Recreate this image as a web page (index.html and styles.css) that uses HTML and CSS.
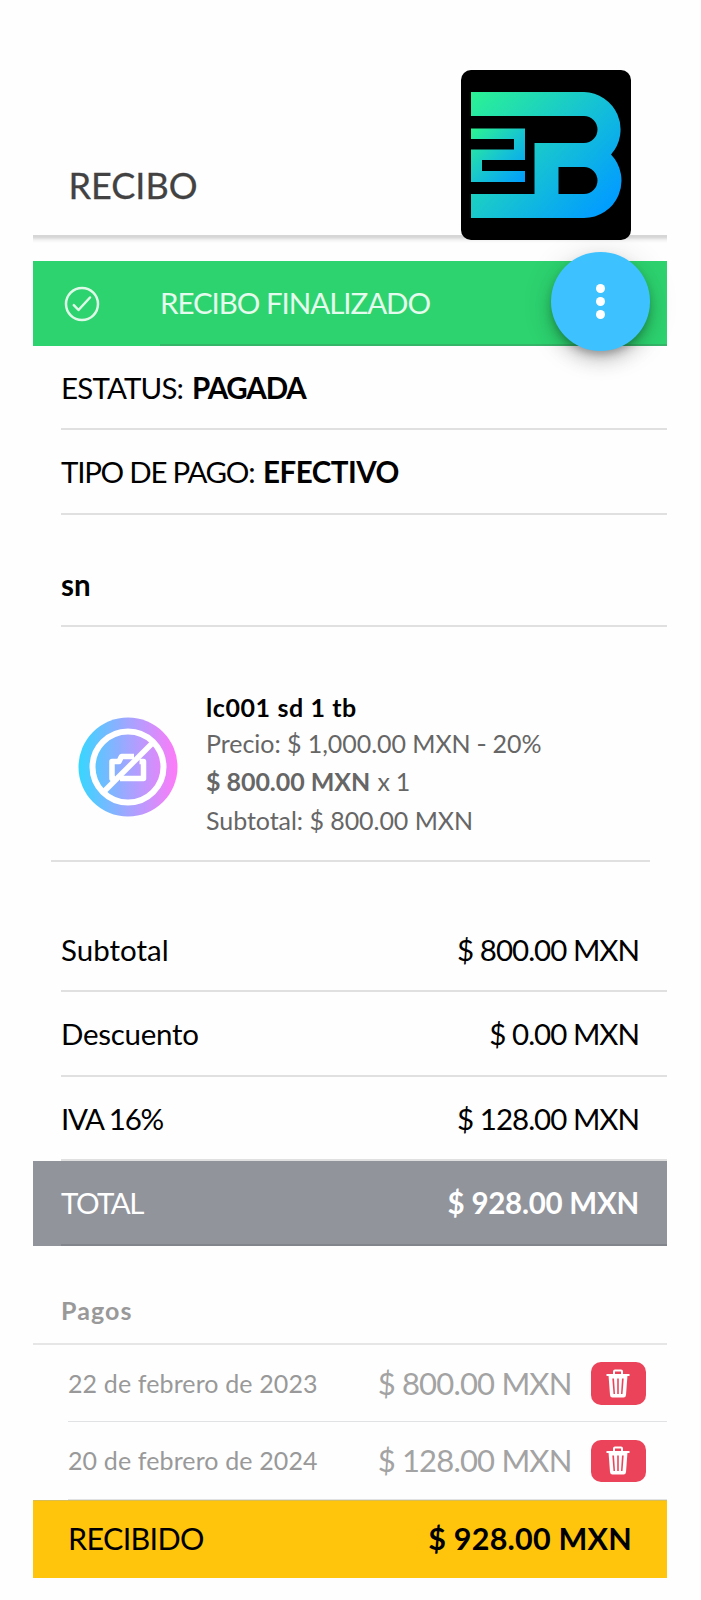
FILE: index.html
```
<!DOCTYPE html>
<html lang="es">
<head>
<meta charset="utf-8">
<title>Recibo</title>
<link rel="stylesheet" href="styles.css">
</head>
<body>
<main class="page">
  <header class="header">
    <h1 class="title">RECIBO</h1>
    <svg class="logo" viewBox="0 0 170 170" aria-label="Logo">
      <defs>
        <linearGradient id="b" gradientUnits="userSpaceOnUse" x1="12" y1="22" x2="146" y2="146">
          <stop offset="0" stop-color="#2bf294"/><stop offset=".5" stop-color="#17c5d0"/><stop offset=".92" stop-color="#04a0fb"/><stop offset="1" stop-color="#009cff"/>
        </linearGradient>
        <linearGradient id="two" gradientUnits="userSpaceOnUse" x1="12" y1="60" x2="64" y2="112">
          <stop offset="0" stop-color="#2bf294"/><stop offset=".5" stop-color="#17c5d0"/><stop offset="1" stop-color="#009cff"/>
        </linearGradient>
      </defs>
      <rect width="170" height="170" rx="10"/>
      <path fill="url(#b)" fill-rule="evenodd" d="M10 22H123A37.500 37.500 0 0 1 150 84.500A37.500 37.500 0 0 1 123 148H10V124H73.500V73H123A13.500 13.500 0 0 0 123 46H10ZM97.500 97V124H123A13.500 13.500 0 0 0 123 97Z"/>
      <path fill="url(#two)" d="M10 58.500H64V90H21V101H64V112H10V79.500H53V69H10Z"/>
    </svg>
  </header>
  <div class="header-shadow"></div>

  <section class="list">
    <div class="row done">
      <svg class="check" viewBox="0 0 36 36"><circle cx="18" cy="18" r="16"/><path d="M9.800 19.200L14.500 24L26 11.500"/></svg>
      <div class="line done-line"><span class="t-done">RECIBO FINALIZADO</span></div>
      <button class="fab" aria-label="Opciones"><i></i><i></i><i></i></button>
    </div>
    <div class="row"><div class="line"><span class="t-status">ESTATUS:</span><b class="t-paid">PAGADA</b></div></div>
    <div class="row"><div class="line"><span class="t-type">TIPO DE PAGO:</span><b class="t-cash">EFECTIVO</b></div></div>
    <div class="row client"><div class="line"><b>sn</b></div></div>
  </section>

  <section class="product">
    <svg class="avatar" viewBox="0 0 100 100">
      <defs><linearGradient id="a" x1="0" x2="1" y1="0" y2="0"><stop offset="0" stop-color="#36d7ff"/><stop offset=".5" stop-color="#a2a5ff"/><stop offset="1" stop-color="#ff7af8"/></linearGradient></defs>
      <circle cx="50" cy="50" r="49.500" fill="url(#a)"/>
      <g fill="none" stroke="#fff" stroke-width="6">
        <circle cx="50" cy="50" r="35.500"/>
        <path stroke-width="5.500" d="M25.500 75L75 25.500"/>
        <path stroke-width="5.500" stroke-linejoin="round" d="M61.500 44.500H65.500V61.500H42M34 61.500V44.500H41L43.500 39.500H56M34 44.500V61.500L37 61.500"/>
      </g>
    </svg>
    <div class="product-text">
      <h2>lc001 sd 1 tb</h2>
      <p>Precio: $ 1,000.00 MXN <span class="dash">-</span> 20%</p>
      <p><b>$ 800.00 MXN</b> <span class="qty">x 1</span></p>
      <p>Subtotal: $ 800.00 MXN</p>
    </div>
  </section>

  <section class="totals">
    <div class="row"><div class="line"><span>Subtotal</span><span class="amount">$ 800.00 MXN</span></div></div>
    <div class="row"><div class="line"><span class="t-disc">Descuento</span><span class="amount">$ 0.00 MXN</span></div></div>
    <div class="row"><div class="line"><span class="t-iva">IVA 16%</span><span class="amount">$ 128.00 MXN</span></div></div>
    <div class="row total"><div class="line"><span class="t-total">TOTAL</span><b class="amount">$ 928.00 MXN</b></div></div>
  </section>

  <section class="payments">
    <h3>Pagos</h3>
    <div class="pay"><span class="date">22 de febrero de 2023</span><span class="sum">$ 800.00 MXN</span>
      <button class="del" aria-label="Eliminar"><svg viewBox="0 0 24 29"><path d="M8 5V2.500Q8 1.500 9 1.500H15Q16 1.500 16 2.500V5M.500 6H23.500" /><path class="can" fill-rule="evenodd" d="M2.500 6H21.500L20 26Q19.800 28.500 17.500 28.500H6.500Q4.200 28.500 4 26ZM6.300 9.500L7.500 25H9L8 9.500ZM11.200 9.500V25H12.800V9.500ZM16 9.500L15 25H16.500L17.700 9.500Z"/></svg></button></div>
    <div class="pay"><span class="date">20 de febrero de 2024</span><span class="sum">$ 128.00 MXN</span>
      <button class="del" aria-label="Eliminar"><svg viewBox="0 0 24 29"><path d="M8 5V2.500Q8 1.500 9 1.500H15Q16 1.500 16 2.500V5M.500 6H23.500" /><path class="can" fill-rule="evenodd" d="M2.500 6H21.500L20 26Q19.800 28.500 17.500 28.500H6.500Q4.200 28.500 4 26ZM6.300 9.500L7.500 25H9L8 9.500ZM11.200 9.500V25H12.800V9.500ZM16 9.500L15 25H16.500L17.700 9.500Z"/></svg></button></div>
    <div class="received"><span class="t-rec">RECIBIDO</span><b>$ 928.00 MXN</b></div>
  </section>
</main>
</body>
</html>
```
FILE: styles.css
```
* { box-sizing: border-box; }
body { margin: 0; background: #fefefe; color: #000; font-family: Lato, "Noto Sans", sans-serif; font-size: 29.5px; }
h1, h2, h3, p { margin: 0; }
button { border: 0; padding: 0; }
.page { width: 634px; height: 1600px; margin-left: 33px; display: flex; flex-direction: column; }

.header { position: relative; height: 235px; flex: none; display: flex; align-items: flex-end; padding: 0 0 26px 35.5px; }
.title { font-size: 36px; font-weight: 400; line-height: 48px; color: #424242; -webkit-text-stroke: .3px #424242; }
.logo { position: absolute; left: 428px; top: 70px; width: 170px; height: 170px; }
.header-shadow { height: 26px; flex: none; background: linear-gradient(#d6d6d6 0 2px, #dedede 3px, #f2f2f2 5px, #fefefe 8px); }

.row { position: relative; height: 84.5px; flex: none; padding-left: 28px; display: flex; }
.line { flex: 1; display: flex; align-items: center; padding: 2px 28px 0 0; border-bottom: 2px solid #e0e0e0; line-height: 40px; white-space: pre; }
.list, .totals { display: flex; flex-direction: column; }

.done { background: #2dd36f; color: #e4fbed; align-items: stretch; padding-left: 31px; }
.check { width: 36px; height: 36px; margin: 25px 60px 0 0; fill: none; stroke: #dff9e9; stroke-width: 2.5; stroke-linecap: round; stroke-linejoin: round; }
.done-line { border-color: #34b567; }
.t-done { letter-spacing: -1.05px; }
.t-status { letter-spacing: -.83px; width: 131px; }
.t-paid { letter-spacing: -1.14px; }
.t-type { letter-spacing: -1.27px; width: 202px; }
.t-cash { letter-spacing: -.5px; }
.client { margin-top: 28px; }

.fab { position: absolute; z-index: 1; left: 518px; top: -9px; width: 98.5px; height: 98.5px; border-radius: 50%; background: #3dc2ff; display: flex; flex-direction: column; align-items: center; justify-content: center; gap: 4px; box-shadow: 0 5px 9px -2px rgba(0,0,0,.28), 0 10px 18px rgba(0,0,0,.16), 0 3px 32px rgba(0,0,0,.12); }
.fab i { width: 9px; height: 9px; border-radius: 50%; background: #fff; }

.product { flex: none; height: 234.5px; margin: 0 17px 0 18px; padding: 64px 0 0 27px; display: flex; align-items: flex-start; border-bottom: 2px solid #e0e0e0; font-size: 25px; color: #666; }
.avatar { width: 100px; height: 100px; margin: 26px 28px 0 0; }
.product-text { white-space: nowrap; padding-top: 1px; }
.product h2 { font-size: 25px; line-height: 30px; margin-bottom: 1.5px; color: #000; letter-spacing: .59px; }
.product p { line-height: 38.5px; letter-spacing: -.05px; }
.dash { display: inline-block; transform: scaleX(1.15); }
.product .qty { letter-spacing: -.3px; margin-left: 1px; }

.totals { margin-top: 46px; }
.amount { margin-left: auto; letter-spacing: -.99px; }
.t-disc { letter-spacing: -.27px; }
.t-iva { letter-spacing: -1.33px; }
.t-total { letter-spacing: -1.55px; }
.total { background: #92949c; color: #fff; }
.total .line { border-color: #83858c; }
.total .amount { letter-spacing: -.25px; }

.payments { display: flex; flex-direction: column; }
.payments h3 { height: 99px; padding: 49px 0 0 28px; border-bottom: 2px solid #e6e6e6; font-size: 25px; line-height: 30px; letter-spacing: 1.1px; color: #999; }
.pay { height: 77.5px; flex: none; margin-left: 35px; padding-right: 21px; border-bottom: 1px solid #e0e2e3; display: flex; align-items: center; color: #a3a3a3; }
.date { font-size: 25px; letter-spacing: .12px; color: #999; }
.sum { margin-left: auto; font-size: 31px; letter-spacing: -.82px; }
.del { width: 55.5px; height: 42.5px; margin: 1px 0 0 19px; border-radius: 10px; background: #eb445a; display: grid; place-items: center; }
.del svg { width: 24px; height: 29px; fill: none; stroke: #fff; stroke-width: 2; }
.del .can { fill: #fff; stroke: none; }
.received { height: 78px; flex: none; padding: 0 35px 3px; display: flex; align-items: center; justify-content: space-between; background: #ffc40c; font-size: 30.5px; border-top: 1px solid #d9bd55; }
.t-rec { letter-spacing: -.66px; }
.received b { letter-spacing: .23px; }
```
